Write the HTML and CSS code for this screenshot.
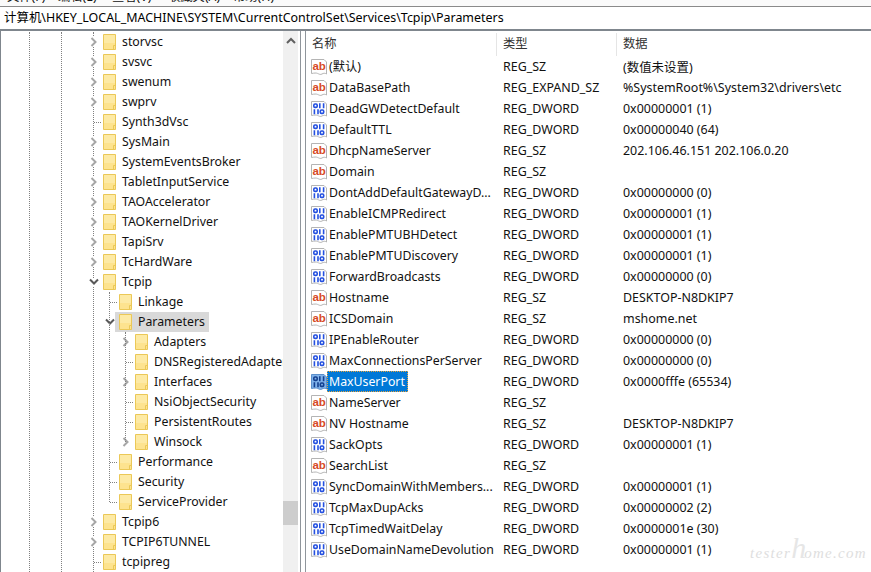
FILE: index.html
```html
<!DOCTYPE html>
<html lang="zh">
<head>
<meta charset="utf-8">
<title>注册表编辑器</title>
<link rel="stylesheet" href="styles.css">
</head>
<body>
<svg class="defs" aria-hidden="true">
  <symbol id="folder" viewBox="0 0 13 16">
    <path d="M.5.5h12v15H.5z" fill="#fde38f" stroke="#ebc857"/>
    <path d="M1 1h11v8H1z" fill="#fdeeb4" opacity=".6"/>
    <path d="M10.500 15V11.500h2" fill="none" stroke="#ebc857"/>
  </symbol>
  <symbol id="right" viewBox="0 0 8 10">
    <path d="M1.500 1l4 4-4 4" fill="none" stroke="#a6a6a6" stroke-width="2"/>
  </symbol>
  <symbol id="down" viewBox="0 0 10 8">
    <path d="M1 1.500l4 4 4-4" fill="none" stroke="#595959" stroke-width="2"/>
  </symbol>
  <symbol id="ab" viewBox="0 0 16 16">
    <path d="M.5.5h12.500l2.500 2.500v12c-1.500-1-3-1-4.500 0s-3 0-4.500-.6-3-.4-6 .1z" fill="#fff" stroke="#b4b4b4"/>
    <text x="1.400" y="11" class="ab-text">ab</text>
  </symbol>
  <symbol id="bin" viewBox="0 0 16 16">
    <path d="M.5.5h12.500l2.500 2.500v12c-1.500-1-3-1-4.500 0s-3 0-4.500-.6-3-.4-6 .1z" fill="#fff" stroke="#b4b4b4"/>
    <g fill="none" stroke="#2450e0" stroke-width="1.600">
      <rect x="2.800" y="3" width="3.400" height="3.400" rx="1.200"/>
      <path d="M8.800 2.200v5M12.600 2.200v5M3.400 8.200v5M7 8.200v5"/>
      <rect x="9.300" y="9" width="3.400" height="3.400" rx="1.200"/>
    </g>
  </symbol>
  <symbol id="binsel" viewBox="0 0 16 16">
    <path d="M.5.5h12.500l2.500 2.500v12c-1.500-1-3-1-4.500 0s-3 0-4.500-.6-3-.4-6 .1z" fill="#7fb2ea" stroke="#5b8fcb"/>
    <g fill="none" stroke="#14408f" stroke-width="1.600">
      <rect x="2.800" y="3" width="3.400" height="3.400" rx="1.200"/>
      <path d="M8.800 2.200v5M12.600 2.200v5M3.400 8.200v5M7 8.200v5"/>
      <rect x="9.300" y="9" width="3.400" height="3.400" rx="1.200"/>
    </g>
  </symbol>
</svg>

<div class="app">
  <nav class="menu">
    <span class="m1">文件(F)</span>
    <span class="m2">编辑(E)</span>
    <span class="m3">查看(V)</span>
    <span class="m4">收藏夹(A)</span>
    <span class="m5">帮助(H)</span>
  </nav>
  <div class="address">计算机\HKEY_LOCAL_MACHINE\SYSTEM\CurrentControlSet\Services\Tcpip\Parameters</div>

  <div class="panes">
    <aside class="tree-pane">
      <div class="tree">
        <div class="guide g1"><div class="guide g2"><div class="guide g3">
          <div class="row"><span class="exp"><svg class="chev-r"><use href="#right"/></svg></span><svg class="folder"><use href="#folder"/></svg><span class="label">storvsc</span></div>
          <div class="row"><span class="exp"><svg class="chev-r"><use href="#right"/></svg></span><svg class="folder"><use href="#folder"/></svg><span class="label">svsvc</span></div>
          <div class="row"><span class="exp"><svg class="chev-r"><use href="#right"/></svg></span><svg class="folder"><use href="#folder"/></svg><span class="label">swenum</span></div>
          <div class="row"><span class="exp"><svg class="chev-r"><use href="#right"/></svg></span><svg class="folder"><use href="#folder"/></svg><span class="label">swprv</span></div>
          <div class="row"><span class="conn"></span><svg class="folder"><use href="#folder"/></svg><span class="label">Synth3dVsc</span></div>
          <div class="row"><span class="exp"><svg class="chev-r"><use href="#right"/></svg></span><svg class="folder"><use href="#folder"/></svg><span class="label">SysMain</span></div>
          <div class="row"><span class="exp"><svg class="chev-r"><use href="#right"/></svg></span><svg class="folder"><use href="#folder"/></svg><span class="label">SystemEventsBroker</span></div>
          <div class="row"><span class="exp"><svg class="chev-r"><use href="#right"/></svg></span><svg class="folder"><use href="#folder"/></svg><span class="label">TabletInputService</span></div>
          <div class="row"><span class="exp"><svg class="chev-r"><use href="#right"/></svg></span><svg class="folder"><use href="#folder"/></svg><span class="label">TAOAccelerator</span></div>
          <div class="row"><span class="exp"><svg class="chev-r"><use href="#right"/></svg></span><svg class="folder"><use href="#folder"/></svg><span class="label">TAOKernelDriver</span></div>
          <div class="row"><span class="exp"><svg class="chev-r"><use href="#right"/></svg></span><svg class="folder"><use href="#folder"/></svg><span class="label">TapiSrv</span></div>
          <div class="row"><span class="exp"><svg class="chev-r"><use href="#right"/></svg></span><svg class="folder"><use href="#folder"/></svg><span class="label">TcHardWare</span></div>
          <div class="row"><span class="exp"><svg class="chev-d"><use href="#down"/></svg></span><svg class="folder"><use href="#folder"/></svg><span class="label">Tcpip</span></div>
          <div class="sub">
            <div class="row"><span class="conn"></span><svg class="folder"><use href="#folder"/></svg><span class="label">Linkage</span></div>
            <div class="row"><span class="exp"><svg class="chev-d"><use href="#down"/></svg></span><span class="picked"><svg class="folder"><use href="#folder"/></svg><span class="label">Parameters</span></span></div>
            <div class="sub">
              <div class="row"><span class="exp"><svg class="chev-r"><use href="#right"/></svg></span><svg class="folder"><use href="#folder"/></svg><span class="label">Adapters</span></div>
              <div class="row"><span class="conn"></span><svg class="folder"><use href="#folder"/></svg><span class="label">DNSRegisteredAdapters</span></div>
              <div class="row"><span class="exp"><svg class="chev-r"><use href="#right"/></svg></span><svg class="folder"><use href="#folder"/></svg><span class="label">Interfaces</span></div>
              <div class="row"><span class="conn"></span><svg class="folder"><use href="#folder"/></svg><span class="label">NsiObjectSecurity</span></div>
              <div class="row"><span class="conn"></span><svg class="folder"><use href="#folder"/></svg><span class="label">PersistentRoutes</span></div>
              <div class="row"><span class="exp"><svg class="chev-r"><use href="#right"/></svg></span><svg class="folder"><use href="#folder"/></svg><span class="label">Winsock</span></div>
            </div>
            <div class="row"><span class="conn"></span><svg class="folder"><use href="#folder"/></svg><span class="label">Performance</span></div>
            <div class="row"><span class="conn"></span><svg class="folder"><use href="#folder"/></svg><span class="label">Security</span></div>
            <div class="row"><span class="conn"></span><svg class="folder"><use href="#folder"/></svg><span class="label">ServiceProvider</span></div>
          </div>
          <div class="row"><span class="exp"><svg class="chev-r"><use href="#right"/></svg></span><svg class="folder"><use href="#folder"/></svg><span class="label">Tcpip6</span></div>
          <div class="row"><span class="exp"><svg class="chev-r"><use href="#right"/></svg></span><svg class="folder"><use href="#folder"/></svg><span class="label">TCPIP6TUNNEL</span></div>
          <div class="row"><span class="conn"></span><svg class="folder"><use href="#folder"/></svg><span class="label">tcpipreg</span></div>
        </div></div></div>
      </div>
      <div class="scrollbar">
        <svg class="arrow" viewBox="0 0 10 8"><path d="M1 6l4-4 4 4" fill="none" stroke="#606060" stroke-width="2"/></svg>
        <div class="thumb"></div>
      </div>
    </aside>

    <main class="list-pane">
      <div class="head">
        <div class="hcell">名称</div>
        <div class="hcell">类型</div>
        <div class="hcell last">数据</div>
      </div>
      <div class="item"><div class="name"><svg class="ico"><use href="#ab"/></svg><span class="nm">(默认)</span></div><div class="cell">REG_SZ</div><div class="cell">(数值未设置)</div></div>
      <div class="item"><div class="name"><svg class="ico"><use href="#ab"/></svg><span class="nm">DataBasePath</span></div><div class="cell">REG_EXPAND_SZ</div><div class="cell">%SystemRoot%\System32\drivers\etc</div></div>
      <div class="item"><div class="name"><svg class="ico"><use href="#bin"/></svg><span class="nm">DeadGWDetectDefault</span></div><div class="cell">REG_DWORD</div><div class="cell">0x00000001 (1)</div></div>
      <div class="item"><div class="name"><svg class="ico"><use href="#bin"/></svg><span class="nm">DefaultTTL</span></div><div class="cell">REG_DWORD</div><div class="cell">0x00000040 (64)</div></div>
      <div class="item"><div class="name"><svg class="ico"><use href="#ab"/></svg><span class="nm">DhcpNameServer</span></div><div class="cell">REG_SZ</div><div class="cell">202.106.46.151 202.106.0.20</div></div>
      <div class="item"><div class="name"><svg class="ico"><use href="#ab"/></svg><span class="nm">Domain</span></div><div class="cell">REG_SZ</div><div class="cell"></div></div>
      <div class="item"><div class="name"><svg class="ico"><use href="#bin"/></svg><span class="nm">DontAddDefaultGatewayD...</span></div><div class="cell">REG_DWORD</div><div class="cell">0x00000000 (0)</div></div>
      <div class="item"><div class="name"><svg class="ico"><use href="#bin"/></svg><span class="nm">EnableICMPRedirect</span></div><div class="cell">REG_DWORD</div><div class="cell">0x00000001 (1)</div></div>
      <div class="item"><div class="name"><svg class="ico"><use href="#bin"/></svg><span class="nm">EnablePMTUBHDetect</span></div><div class="cell">REG_DWORD</div><div class="cell">0x00000001 (1)</div></div>
      <div class="item"><div class="name"><svg class="ico"><use href="#bin"/></svg><span class="nm">EnablePMTUDiscovery</span></div><div class="cell">REG_DWORD</div><div class="cell">0x00000001 (1)</div></div>
      <div class="item"><div class="name"><svg class="ico"><use href="#bin"/></svg><span class="nm">ForwardBroadcasts</span></div><div class="cell">REG_DWORD</div><div class="cell">0x00000000 (0)</div></div>
      <div class="item"><div class="name"><svg class="ico"><use href="#ab"/></svg><span class="nm">Hostname</span></div><div class="cell">REG_SZ</div><div class="cell">DESKTOP-N8DKIP7</div></div>
      <div class="item"><div class="name"><svg class="ico"><use href="#ab"/></svg><span class="nm">ICSDomain</span></div><div class="cell">REG_SZ</div><div class="cell">mshome.net</div></div>
      <div class="item"><div class="name"><svg class="ico"><use href="#bin"/></svg><span class="nm">IPEnableRouter</span></div><div class="cell">REG_DWORD</div><div class="cell">0x00000000 (0)</div></div>
      <div class="item"><div class="name"><svg class="ico"><use href="#bin"/></svg><span class="nm">MaxConnectionsPerServer</span></div><div class="cell">REG_DWORD</div><div class="cell">0x00000000 (0)</div></div>
      <div class="item"><div class="name"><svg class="ico"><use href="#binsel"/></svg><span class="nm chosen">MaxUserPort</span></div><div class="cell">REG_DWORD</div><div class="cell">0x0000fffe (65534)</div></div>
      <div class="item"><div class="name"><svg class="ico"><use href="#ab"/></svg><span class="nm">NameServer</span></div><div class="cell">REG_SZ</div><div class="cell"></div></div>
      <div class="item"><div class="name"><svg class="ico"><use href="#ab"/></svg><span class="nm">NV Hostname</span></div><div class="cell">REG_SZ</div><div class="cell">DESKTOP-N8DKIP7</div></div>
      <div class="item"><div class="name"><svg class="ico"><use href="#bin"/></svg><span class="nm">SackOpts</span></div><div class="cell">REG_DWORD</div><div class="cell">0x00000001 (1)</div></div>
      <div class="item"><div class="name"><svg class="ico"><use href="#ab"/></svg><span class="nm">SearchList</span></div><div class="cell">REG_SZ</div><div class="cell"></div></div>
      <div class="item"><div class="name"><svg class="ico"><use href="#bin"/></svg><span class="nm">SyncDomainWithMembers...</span></div><div class="cell">REG_DWORD</div><div class="cell">0x00000001 (1)</div></div>
      <div class="item"><div class="name"><svg class="ico"><use href="#bin"/></svg><span class="nm">TcpMaxDupAcks</span></div><div class="cell">REG_DWORD</div><div class="cell">0x00000002 (2)</div></div>
      <div class="item"><div class="name"><svg class="ico"><use href="#bin"/></svg><span class="nm">TcpTimedWaitDelay</span></div><div class="cell">REG_DWORD</div><div class="cell">0x0000001e (30)</div></div>
      <div class="item"><div class="name"><svg class="ico"><use href="#bin"/></svg><span class="nm">UseDomainNameDevolution</span></div><div class="cell">REG_DWORD</div><div class="cell">0x00000001 (1)</div></div>
    </main>
  </div>
  <div class="watermark">tester<span class="wm-h">h</span>ome.com</div>
</div>
</body>
</html>
```

FILE: styles.css
```css
* { box-sizing: border-box; }
html, body { margin: 0; padding: 0; }
body {
  width: 871px;
  height: 572px;
  overflow: hidden;
  background: #fff;
  color: #111;
  font-family: "Noto Sans", "Noto Sans CJK SC", sans-serif;
  font-size: 12.3px;
}
.defs { position: absolute; width: 0; height: 0; }
.ab-text { font-family: "Liberation Sans", sans-serif; font-weight: 700; font-size: 11.5px; fill: #d74a26; }

.app { position: relative; display: flex; flex-direction: column; height: 572px; }

.menu {
  display: flex;
  align-items: flex-end;
  height: 7px;
  padding-left: 7px;
  overflow: hidden;
  border-bottom: 1px solid #8a8a8a;
  background: #fafafa;
  line-height: 17px;
  white-space: nowrap;
  flex: none;
}
.menu span { flex: none; margin-bottom: 1px; }
.menu .m1 { width: 51px; }
.menu .m2 { width: 54px; }
.menu .m3 { width: 56px; }
.menu .m4 { width: 65px; }

.address {
  flex: none;
  height: 24px;
  padding: 0 0 0 4px;
  font-size: 12.45px;
  line-height: 22px;
  border-bottom: 2px solid #7f868d;
  white-space: nowrap;
  overflow: hidden;
  color: #000;
}

.panes { flex: 1; display: flex; min-height: 0; }

.tree-pane {
  flex: none;
  width: 301px;
  display: flex;
  border-left: 1px solid #7f868d;
  border-right: 1px solid #8f959b;
  padding-right: 2px;
}
.tree {
  width: 282px;
  overflow: hidden;
  padding-top: 1px;
  white-space: nowrap;
  flex: none;
}
.guide { border-left: 1px dotted #808080; }
.g1 { margin-left: 28px; }
.g2 { margin-left: 31px; }
.g3 { margin-left: 31px; }

.row { display: flex; align-items: center; height: 20px; }
.exp {
  flex: none;
  width: 18px;
  margin-left: -9px;
  height: 20px;
  display: flex;
  align-items: center;
  justify-content: center;
}
.exp svg { background: #fff; }
.chev-r { width: 8px; height: 10px; }
.chev-d { width: 10px; height: 8px; }
.conn {
  flex: none;
  width: 7px;
  margin-right: 2px;
  border-top: 1px dotted #808080;
}
.folder { flex: none; width: 13px; height: 16px; margin-right: 6px; }
.label { flex: none; margin-bottom: 2px; }
.picked {
  display: flex;
  align-items: center;
  height: 20px;
  margin-left: -4px;
  padding: 0 4px;
  background: #d9d9d9;
}

.sub { position: relative; margin-left: 15px; padding-left: 1px; }
.sub::before {
  content: "";
  position: absolute;
  left: 0;
  top: 0;
  bottom: 10px;
  border-left: 1px dotted #808080;
}

.scrollbar {
  position: relative;
  flex: none;
  width: 15px;
  background: #f0f0f0;
}
.arrow { display: block; width: 10px; height: 8px; margin: 6px auto 0; }
.thumb {
  position: absolute;
  left: 0;
  right: 0;
  top: 470px;
  height: 24px;
  background: #cdcdcd;
}

.list-pane {
  flex: none;
  margin-left: 4px;
  width: 566px;
  border-left: 1px solid #8f959b;
}
.head {
  display: grid;
  grid-template-columns: 191px 120px 1fr;
  height: 25px;
  padding-top: 2px;
}
.hcell {
  padding-left: 6px;
  line-height: 22px;
  border-right: 1px solid #e5e5e5;
  color: #333;
}
.hcell.last { border-right: 0; }

.item {
  display: grid;
  grid-template-columns: 191px 120px 1fr;
  height: 21px;
  align-items: center;
  white-space: nowrap;
}
.name { display: flex; align-items: center; padding-left: 5px; height: 21px; }
.ico { flex: none; width: 16px; height: 16px; }
.nm { padding: 0 3px 0 2px; line-height: 21px; }
.chosen {
  background: #0078d7;
  color: #fff;
  outline: 1px dotted #e8a33d;
  outline-offset: -1px;
}
.cell { padding-left: 6px; font-size: 12.45px; }

.watermark {
  position: absolute;
  left: 750px;
  top: 538px;
  color: #dedede;
  font-family: "Liberation Serif", serif;
  font-style: italic;
  font-size: 15px;
  letter-spacing: 1.300px;
  line-height: 20px;
  white-space: nowrap;
}
.wm-h { font-size: 30px; line-height: 20px; letter-spacing: -2px; color: #e6e6e6; }
```
